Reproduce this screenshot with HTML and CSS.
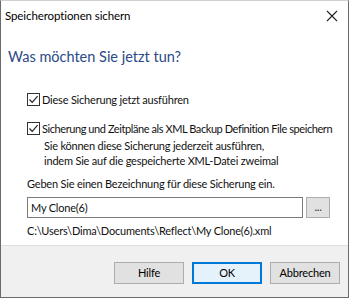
FILE: index.html
```html
<!DOCTYPE html>
<html>
<head>
<meta charset="utf-8">
<link rel="stylesheet" href="styles.css">
</head>
<body>
<div class="window">
  <div class="titlebar">
    <span class="title">Speicheroptionen sichern</span>
    <svg class="close" width="12" height="12" viewBox="0 0 12 12"><path d="M1 1L11 11M11 1L1 11" stroke="#222" stroke-width="1.1" fill="none"/></svg>
  </div>
  <div class="content">
    <div class="heading">Was möchten Sie jetzt tun?</div>
    <label class="check first"><span class="box"><svg width="11" height="11" viewBox="0 0 11 11"><path d="M1.5 5.5L4.2 8.3L9.6 2.2" stroke="#222" stroke-width="1.2" fill="none"/></svg></span><span>Diese Sicherung jetzt ausführen</span></label>
    <label class="check second"><span class="box"><svg width="11" height="11" viewBox="0 0 11 11"><path d="M1.5 5.5L4.2 8.3L9.6 2.2" stroke="#222" stroke-width="1.2" fill="none"/></svg></span><span class="long">Sicherung und Zeitpläne als XML Backup Definition File speichern</span></label>
    <div class="desc">Sie können diese Sicherung jederzeit ausführen,<br>indem Sie auf die gespeicherte XML-Datei zweimal</div>
    <div class="prompt">Geben Sie einen Bezeichnung für diese Sicherung ein.</div>
    <div class="inputrow">
      <div class="input">My Clone(6)</div>
      <div class="browse">...</div>
    </div>
    <div class="path">C:\Users\Dima\Documents\Reflect\My Clone(6).xml</div>
  </div>
  <div class="footer">
    <div class="btn">Hilfe</div>
    <div class="btn default">OK</div>
    <div class="btn">Abbrechen</div>
  </div>
</div>
</body>
</html>
```
FILE: styles.css
```css
html, body {
  margin: 0;
  padding: 0;
  background: #ffffff;
}
.window {
  width: 349px;
  height: 298px;
  box-sizing: border-box;
  border: 1px solid #6a6a6a;
  border-top-color: #d0d0d0;
  display: flex;
  flex-direction: column;
  font-family: Lato, "Noto Sans", sans-serif;
  font-size: 11px;
  letter-spacing: -0.2px;
  color: #111;
  background: #fff;
}
.titlebar {
  height: 30px;
  display: flex;
  align-items: center;
  justify-content: space-between;
  padding: 0 10px 0 4px;
}
.title {
  font-size: 11.5px;
  letter-spacing: -0.1px;
  color: #000;
  margin-top: -1px;
}
.close {
  display: block;
}
.content {
  flex: 1;
  padding: 0 0 0 7px;
  overflow: hidden;
}
.heading {
  font-size: 14.5px;
  letter-spacing: 0;
  color: #2b4a86;
  margin-top: 15px;
  line-height: 22px;
}
.check {
  display: flex;
  align-items: center;
  margin-left: 19px;
  line-height: 15px;
  white-space: nowrap;
}
.check.first { margin-top: 24px; }
.check.second { margin-top: 14px; }
.long {
  letter-spacing: -0.42px;
}
.box {
  width: 11px;
  height: 11px;
  border: 1px solid #333;
  margin-right: 2px;
  display: flex;
  align-items: center;
  justify-content: center;
  background: #fff;
}
.desc {
  margin-left: 36px;
  line-height: 15px;
  margin-top: 2px;
}
.prompt {
  margin-left: 19px;
  margin-top: 8px;
  line-height: 15px;
}
.inputrow {
  display: flex;
  margin-left: 19px;
  margin-top: 6px;
  gap: 3px;
}
.input {
  width: 276px;
  height: 21px;
  box-sizing: border-box;
  border: 1px solid #7a7a7a;
  padding-left: 3px;
  line-height: 19px;
}
.browse {
  width: 24px;
  height: 21px;
  box-sizing: border-box;
  border: 1px solid #adadad;
  background: #e1e1e1;
  text-align: center;
  line-height: 17px;
  color: #333;
}
.path {
  margin-left: 19px;
  margin-top: 5px;
  line-height: 15px;
}
.footer {
  height: 52px;
  box-sizing: border-box;
  background: #f0f0f0;
  border-top: 1px solid #dfdfdf;
  display: flex;
  justify-content: flex-end;
  align-items: flex-start;
  padding: 16px 8px 0 0;
  gap: 8px;
}
.btn {
  width: 70px;
  height: 22px;
  box-sizing: border-box;
  border: 1px solid #adadad;
  background: #e1e1e1;
  text-align: center;
  line-height: 20px;
  color: #000;
}
.btn.default {
  border: 2px solid #0078d7;
  background: #e5f1fb;
  line-height: 18px;
}
```
